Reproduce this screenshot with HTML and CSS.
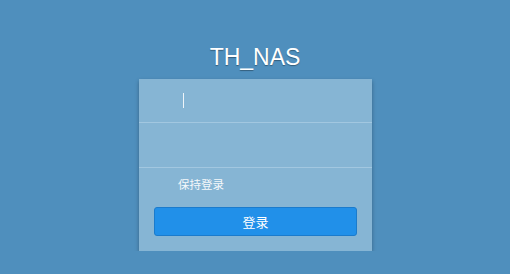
FILE: index.html
```html
<!DOCTYPE html>
<html>
<head>
    <meta charset="UTF-8">
    <title>TH_NAS</title>
    <link rel="stylesheet" href="styles.css">
</head>
<body>
    <div class="login">
        <h1 class="titulo">TH_NAS</h1>

        <form class="cartao">
            <div class="linha">
                <span class="cursor"></span>
            </div>
            <div class="linha"></div>

            <div class="lembrar">保持登录</div>

            <button type="button" class="entrar">登录</button>
        </form>
    </div>
</body>
</html>
```

FILE: styles.css
```css
body {
    margin: 0;
    background-color: #4f8fbd;
    font-family: "Liberation Sans", "Noto Sans CJK SC", sans-serif;
}
.login {
    display: flex;
    flex-direction: column;
    align-items: center;
    padding-top: 42px;
}
.titulo {
    margin: 0 0 7px 0;
    font-size: 23px;
    line-height: 30px;
    font-weight: normal;
    color: #fff;
    text-shadow: 0 1px 1px rgba(0, 0, 0, 0.35);
}
.cartao {
    width: 233px;
    margin-left: 1px;
    background-color: #86b5d4;
    box-shadow: 0 2px 4px rgba(0, 0, 0, 0.3);
    padding-bottom: 15px;
}
.linha {
    height: 43px;
    border-bottom: 1px solid #a2c7e0;
    padding-left: 44px;
    display: flex;
    align-items: center;
}
.linha + .linha {
    height: 44px;
}
.cursor {
    width: 1px;
    height: 15px;
    background-color: #eef4f9;
}
.lembrar {
    padding: 9px 0 0 39px;
    font-size: 11.5px;
    line-height: 16px;
    color: #f4f8fb;
}
.entrar {
    display: block;
    margin: 14px 15px 0 15px;
    width: 203px;
    height: 29px;
    background-color: #2190e9;
    border: 1px solid #1b7bcc;
    border-radius: 3px;
    color: #fff;
    font-family: "Noto Sans CJK SC", sans-serif;
    font-size: 13px;
    padding: 0;
}
```
